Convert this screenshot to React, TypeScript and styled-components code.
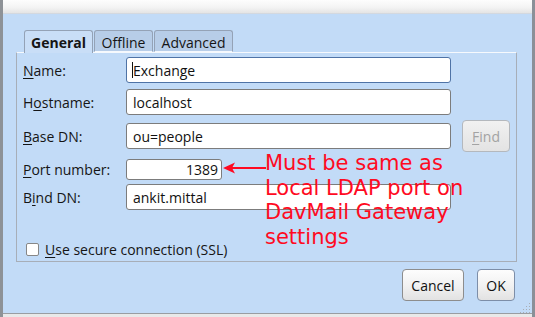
import React from "react";
import styled, { createGlobalStyle } from "styled-components";

const Global = createGlobalStyle`
  html, body { margin: 0; padding: 0; background: #c2dbf7; }
  body { font-family: "Open Sans", "Noto Sans", sans-serif; }
`;

const Frame = styled.div`
  position: relative;
  width: 535px;
  height: 317px;
  box-sizing: border-box;
  border-left: 3px solid #8e9297;
  border-right: 3px solid #8a9098;
  background: #c2dbf7;
  display: flex;
  flex-direction: column;
  font-family: "Open Sans", "Noto Sans", sans-serif;
  font-size: 14px;
  line-height: 19px;
  color: #151515;
  overflow: hidden;
`;

const TitleStrip = styled.div`
  flex: none;
  height: 14px;
  box-sizing: border-box;
  background: linear-gradient(#fdfdfd, #f4f4f4 55%, #e4e4e4);
  border-bottom: 1px solid #d3d8df;
`;

const Body = styled.div`
  flex: 1;
  display: flex;
  flex-direction: column;
  padding: 16px 15px 12px 13px;
`;

const BottomEdge = styled.div`
  flex: none;
  height: 4px;
  box-sizing: border-box;
  border-top: 1px solid #9a9da2;
  background: #e9e9e9;
`;

const TabBar = styled.div`
  display: flex;
  gap: 1px;
  height: 22px;
  margin-left: 8px;
  position: relative;
  z-index: 1;
`;

const Tab = styled.div<{ $active?: boolean; $w: number }>`
  box-sizing: border-box;
  width: ${(p) => p.$w}px;
  height: ${(p) => (p.$active ? 23 : 22)}px;
  padding-top: 2px;
  text-align: center;
  border: 1px solid #94a2b6;
  border-bottom: ${(p) => (p.$active ? "none" : "1px solid #f6f9fd")};
  border-radius: 3px 3px 0 0;
  background: ${(p) => (p.$active ? "#c9def7" : "#b7cde8")};
  font-weight: ${(p) => (p.$active ? 700 : 400)};
  color: #151515;
  white-space: nowrap;
`;

const Panel = styled.div`
  box-sizing: border-box;
  height: 210px;
  border: 1px solid #a7aeb8;
  border-top-color: #f6f9fd;
  padding: 4px 6px 3px 6px;
  display: flex;
  flex-direction: column;
`;

const Row = styled.div<{ $h: number; $mt: number }>`
  display: grid;
  grid-template-columns: 92px 325px 48px;
  column-gap: 11px;
  align-items: center;
  height: ${(p) => p.$h}px;
  margin-top: ${(p) => p.$mt}px;
`;

const Label = styled.div`
  white-space: nowrap;
`;

const Mn = styled.span`
  text-decoration: underline;
  text-underline-offset: 2px;
`;

const Field = styled.div<{ $focused?: boolean; $right?: boolean; $w?: number; $h?: number }>`
  box-sizing: border-box;
  width: ${(p) => p.$w ?? 325}px;
  height: ${(p) => p.$h ?? 26}px;
  border: 1px solid ${(p) => (p.$focused ? "#4f73a6" : "#7c7c7c")};
  border-radius: 3px;
  background: #ffffff;
  display: flex;
  align-items: center;
  justify-content: ${(p) => (p.$right ? "flex-end" : "flex-start")};
  padding: ${(p) => (p.$right ? "0 3px 0 6px" : "0 6px")};
  white-space: nowrap;
  color: #111;
`;

const Caret = styled.span`
  display: inline-block;
  width: 1px;
  height: 16px;
  background: #111;
  margin-left: -1px;
`;

const FindButton = styled.div`
  box-sizing: border-box;
  width: 48px;
  height: 32px;
  border: 1px solid #b4b8bd;
  border-radius: 4px;
  background: linear-gradient(#f1f1f1, #e3e3e3);
  color: #a3a3a3;
  display: flex;
  align-items: center;
  justify-content: center;
`;

const CheckRow = styled.div`
  margin-top: auto;
  height: 18px;
  display: flex;
  align-items: center;
  gap: 6px;
  padding-left: 3px;
`;

const CheckBox = styled.div`
  box-sizing: border-box;
  width: 13px;
  height: 13px;
  border: 1px solid #878787;
  border-radius: 2px;
  background: #ffffff;
`;

const ButtonRow = styled.div`
  display: flex;
  justify-content: flex-end;
  gap: 13px;
  margin-top: 7px;
  margin-right: 2px;
  height: 32px;
`;

const Button = styled.div<{ $w: number; $default?: boolean }>`
  box-sizing: border-box;
  width: ${(p) => p.$w}px;
  height: 32px;
  border: 1px solid ${(p) => (p.$default ? "#7d8ea8" : "#8d8d8d")};
  border-radius: 4px;
  background: linear-gradient(#fdfdfd, #f2f2f2 50%, #e2e2e2);
  display: flex;
  align-items: center;
  justify-content: center;
  color: #111;
`;

const Annotation = styled.div`
  position: absolute;
  left: 262px;
  top: 151px;
  font-family: "DejaVu Sans", sans-serif;
  font-size: 21px;
  line-height: 24.6px;
  color: #ff0a22;
  white-space: nowrap;
`;

const Arrow = styled.svg`
  position: absolute;
  left: 219px;
  top: 161px;
`;

const Grip = styled.svg`
  position: absolute;
  right: 1px;
  bottom: 4px;
`;

export default function App() {
  return (
    <>
      <Global />
      <Frame>
        <TitleStrip />
        <Body>
          <TabBar>
            <Tab $active $w={69}>General</Tab>
            <Tab $w={59}>Offline</Tab>
            <Tab $w={79}>Advanced</Tab>
          </TabBar>
          <Panel>
            <Row $h={26} $mt={0}>
              <Label>
                <Mn>N</Mn>ame:
              </Label>
              <Field $focused>
                <Caret />
                Exchange
              </Field>
            </Row>
            <Row $h={26} $mt={6}>
              <Label>
                H<Mn>o</Mn>stname:
              </Label>
              <Field>localhost</Field>
            </Row>
            <Row $h={32} $mt={5}>
              <Label>
                <Mn>B</Mn>ase DN:
              </Label>
              <Field>ou=people</Field>
              <FindButton>
                <span>
                  <Mn>F</Mn>ind
                </span>
              </FindButton>
            </Row>
            <Row $h={21} $mt={7}>
              <Label>
                <Mn>P</Mn>ort number:
              </Label>
              <Field $right $w={96} $h={21}>
                1389
              </Field>
            </Row>
            <Row $h={26} $mt={4}>
              <Label>
                B<Mn>i</Mn>nd DN:
              </Label>
              <Field>ankit.mittal</Field>
            </Row>
            <CheckRow>
              <CheckBox />
              <span>
                <Mn>U</Mn>se secure connection (SSL)
              </span>
            </CheckRow>
          </Panel>
          <ButtonRow>
            <Button $w={62}>Cancel</Button>
            <Button $w={38} $default>
              OK
            </Button>
          </ButtonRow>
        </Body>
        <BottomEdge />
        <Arrow width="46" height="14" viewBox="0 0 46 14">
          <line x1="8" y1="7" x2="44" y2="7" stroke="#ff0a22" strokeWidth="2.2" />
          <polygon points="1,7 13,1.5 10,7 13,12.5" fill="#ff0a22" />
        </Arrow>
        <Annotation>
          Must be same as
          <br />
          Local LDAP port on
          <br />
          DavMail Gateway
          <br />
          settings
        </Annotation>
        <Grip width="12" height="11" viewBox="0 0 12 11">
          {[
            [10, 1],
            [7, 4],
            [10, 4],
            [4, 7],
            [7, 7],
            [10, 7],
            [1, 10],
            [4, 10],
            [7, 10],
            [10, 10],
          ].map(([x, y], i) => (
            <rect key={i} x={x} y={y} width="1" height="1" fill="#a9adb3" />
          ))}
        </Grip>
      </Frame>
    </>
  );
}
